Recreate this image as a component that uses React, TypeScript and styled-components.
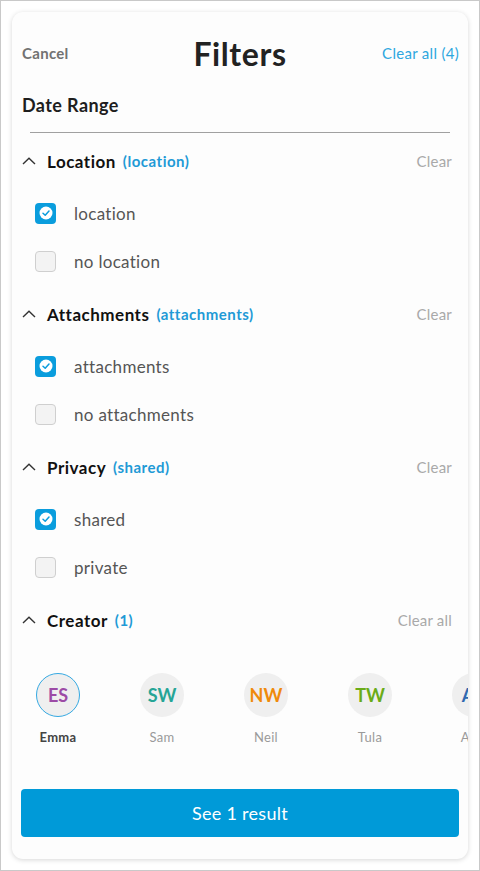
import React from 'react';
import styled, { createGlobalStyle } from 'styled-components';

const GlobalStyle = createGlobalStyle`
  html, body {
    margin: 0;
    padding: 0;
    background: #ffffff;
  }
  body {
    font-family: Lato, "Open Sans", "Liberation Sans", sans-serif;
    -webkit-font-smoothing: antialiased;
  }
`;

interface Option {
  label: string;
  checked: boolean;
}

interface Section {
  title: string;
  tag: string;
  clearText: string;
  options: Option[];
}

interface Creator {
  initials: string;
  name: string;
  color: string;
  selected?: boolean;
}

const sections: Section[] = [
  {
    title: 'Location',
    tag: '(location)',
    clearText: 'Clear',
    options: [
      { label: 'location', checked: true },
      { label: 'no location', checked: false },
    ],
  },
  {
    title: 'Attachments',
    tag: '(attachments)',
    clearText: 'Clear',
    options: [
      { label: 'attachments', checked: true },
      { label: 'no attachments', checked: false },
    ],
  },
  {
    title: 'Privacy',
    tag: '(shared)',
    clearText: 'Clear',
    options: [
      { label: 'shared', checked: true },
      { label: 'private', checked: false },
    ],
  },
];

const creators: Creator[] = [
  { initials: 'ES', name: 'Emma', color: '#9c4ba6', selected: true },
  { initials: 'SW', name: 'Sam', color: '#26a596' },
  { initials: 'NW', name: 'Neil', color: '#ef8a0a' },
  { initials: 'TW', name: 'Tula', color: '#6aab17' },
  { initials: 'AB', name: 'Alex', color: '#2f69b0' },
];

const Chevron = () => (
  <svg width="14" height="8" viewBox="0 0 14 8">
    <polyline points="1,7 7,1.2 13,7" fill="none" stroke="#333" strokeWidth="1.4" />
  </svg>
);

const Checkbox = ({ checked }: { checked: boolean }) => (
  <Box checked={checked}>
    {checked && (
      <svg width="20" height="20" viewBox="0 0 20 20">
        <circle cx="10" cy="10" r="6.5" fill="#fff" />
        <polyline points="7,10.2 9.2,12.2 13,8" fill="none" stroke="#0a9ddd" strokeWidth="1.5" strokeLinecap="round" strokeLinejoin="round" />
      </svg>
    )}
  </Box>
);

const App = () => {
  return (
    <>
      <GlobalStyle />
      <Frame>
        <Card>
          <Header>
            <Cancel>Cancel</Cancel>
            <Title>Filters</Title>
            <ClearAll>Clear all (4)</ClearAll>
          </Header>
          <DateRange>Date Range</DateRange>
          <Divider />
          {sections.map((s) => (
            <SectionBlock key={s.title}>
              <SectionHeader>
                <Chevron />
                <SectionTitle>{s.title}</SectionTitle>
                <SectionTag>{s.tag}</SectionTag>
                <SectionClear>{s.clearText}</SectionClear>
              </SectionHeader>
              <OptionList>
                {s.options.map((o) => (
                  <OptionRow key={o.label}>
                    <Checkbox checked={o.checked} />
                    <OptionLabel>{o.label}</OptionLabel>
                  </OptionRow>
                ))}
              </OptionList>
            </SectionBlock>
          ))}
          <SectionHeader>
            <Chevron />
            <SectionTitle>Creator</SectionTitle>
            <SectionTag>(1)</SectionTag>
            <SectionClear>Clear all</SectionClear>
          </SectionHeader>
          <AvatarRow>
            {creators.map((c) => (
              <AvatarItem key={c.name}>
                <Avatar selected={!!c.selected} style={{ color: c.color }}>
                  {c.initials}
                </Avatar>
                <AvatarName selected={!!c.selected}>{c.name}</AvatarName>
              </AvatarItem>
            ))}
          </AvatarRow>
          <Footer>
            <ResultButton>See 1 result</ResultButton>
          </Footer>
        </Card>
      </Frame>
    </>
  );
};

const Frame = styled.div`
  box-sizing: border-box;
  width: 480px;
  height: 871px;
  border: 1px solid #c9c9c9;
  padding: 11px;
  background: #fff;
`;

const Card = styled.div`
  box-sizing: border-box;
  height: 847px;
  width: 456px;
  border-radius: 11px;
  background: #fdfdfd;
  box-shadow: 0 1px 5px rgba(0, 0, 0, 0.16);
  overflow: hidden;
  display: flex;
  flex-direction: column;
`;

const Header = styled.div`
  position: relative;
  display: flex;
  align-items: center;
  justify-content: space-between;
  height: 34px;
  margin-top: 24px;
  padding: 0 9px 0 10px;
`;

const Cancel = styled.span`
  font-size: 15px;
  font-weight: 700;
  letter-spacing: 0.3px;
  color: #727272;
`;

const Title = styled.span`
  position: absolute;
  left: 0;
  right: 0;
  text-align: center;
  font-size: 32px;
  font-weight: 700;
  letter-spacing: 0.6px;
  color: #222;
  pointer-events: none;
`;

const ClearAll = styled.span`
  font-size: 15px;
  letter-spacing: 0.3px;
  color: #2ea7df;
`;

const DateRange = styled.div`
  margin-top: 25px;
  padding-left: 10px;
  line-height: 20px;
  font-size: 18px;
  font-weight: 700;
  letter-spacing: 0.4px;
  color: #1e1e1e;
`;

const Divider = styled.div`
  margin: 17px 18px 0 18px;
  height: 1px;
  background: #a0a0a0;
`;

const SectionBlock = styled.div`
  display: flex;
  flex-direction: column;
`;

const SectionHeader = styled.div`
  display: flex;
  align-items: center;
  height: 30px;
  margin-top: 13px;
  padding: 0 16px 0 10px;
`;

const SectionTitle = styled.span`
  margin-left: 11px;
  font-size: 17px;
  font-weight: 700;
  letter-spacing: 0.5px;
  color: #111;
`;

const SectionTag = styled.span`
  margin-left: 7px;
  font-size: 15px;
  font-weight: 700;
  letter-spacing: 0.5px;
  color: #1f9ad6;
`;

const SectionClear = styled.span`
  margin-left: auto;
  font-size: 15px;
  letter-spacing: 0.2px;
  color: #a9a9a9;
`;

const OptionList = styled.div`
  display: flex;
  flex-direction: column;
  margin-top: 13px;
  margin-bottom: 1px;
`;

const OptionRow = styled.div`
  display: flex;
  align-items: center;
  height: 48px;
  padding-left: 23px;
`;

const Box = styled.div<{ checked: boolean }>`
  box-sizing: border-box;
  width: 21px;
  height: 21px;
  border-radius: 4px;
  background: ${(p) => (p.checked ? '#0a9ddd' : '#f3f3f3')};
  border: ${(p) => (p.checked ? 'none' : '1px solid #cfcfcf')};
  display: flex;
  align-items: center;
  justify-content: center;
`;

const OptionLabel = styled.span`
  margin-left: 18px;
  font-size: 17px;
  letter-spacing: 0.3px;
  color: #555;
`;

const AvatarRow = styled.div`
  display: flex;
  gap: 60px;
  margin-top: 38px;
  padding-left: 24px;
`;

const AvatarItem = styled.div`
  flex: 0 0 44px;
  width: 44px;
  display: flex;
  flex-direction: column;
  align-items: center;
`;

const Avatar = styled.div<{ selected: boolean }>`
  box-sizing: border-box;
  width: 44px;
  height: 44px;
  border-radius: 50%;
  background: #efefef;
  border: ${(p) => (p.selected ? '1.5px solid #35a9e2' : 'none')};
  display: flex;
  align-items: center;
  justify-content: center;
  font-size: 18px;
  font-weight: 700;
`;

const AvatarName = styled.span<{ selected: boolean }>`
  margin-top: 12px;
  white-space: nowrap;
  font-size: 13px;
  letter-spacing: 0.3px;
  font-weight: ${(p) => (p.selected ? 700 : 400)};
  color: ${(p) => (p.selected ? '#444' : '#9a9a9a')};
`;

const Footer = styled.div`
  margin-top: auto;
  padding: 0 9px 22px 9px;
`;

const ResultButton = styled.button`
  width: 100%;
  height: 48px;
  border: none;
  border-radius: 4px;
  background: #009ad8;
  color: #fff;
  font-family: inherit;
  font-size: 18px;
  letter-spacing: 0.3px;
  cursor: pointer;
`;

export default App;
